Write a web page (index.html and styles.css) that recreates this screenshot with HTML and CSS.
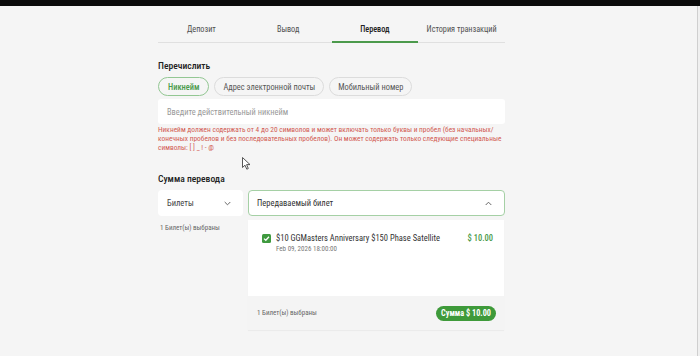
FILE: index.html
```html
<!DOCTYPE html>
<html lang="ru">
<head>
<meta charset="utf-8">
<link rel="stylesheet" href="styles.css">
</head>
<body>
<div class="topbar"></div>
<div class="viewport">
  <div class="page">
    <div class="wallet">
      <nav class="tabs">
        <div class="tab">Депозит</div>
        <div class="tab">Вывод</div>
        <div class="tab active">Перевод</div>
        <div class="tab">История транзакций</div>
      </nav>

      <h2 class="section-title first">Перечислить</h2>
      <div class="pills">
        <button class="pill active">Никнейм</button>
        <button class="pill">Адрес электронной почты</button>
        <button class="pill">Мобильный номер</button>
      </div>
      <div class="input"><span class="placeholder">Введите действительный никнейм</span></div>
      <p class="error">Никнейм должен содержать от 4 до 20 символов и может включать только буквы и пробел (без начальных/ конечных пробелов и без последовательных пробелов). Он может содержать только следующие специальные символы: [ ] _ ! - @</p>

      <h2 class="section-title second">Сумма перевода</h2>
      <div class="amount">
        <div class="left-col">
          <div class="select">
            <span>Билеты</span>
            <svg class="chev" width="7" height="5" viewBox="0 0 7 5"><polyline points="0.7,1 3.5,3.8 6.3,1" fill="none" stroke="#666" stroke-width="1"/></svg>
          </div>
          <div class="count">1 Билет(ы) выбраны</div>
        </div>
        <div class="right-col">
          <div class="select open">
            <span>Передаваемый билет</span>
            <svg class="chev" width="7" height="5" viewBox="0 0 7 5"><polyline points="0.7,4 3.5,1.2 6.3,4" fill="none" stroke="#666" stroke-width="1"/></svg>
          </div>
          <div class="panel">
            <div class="list">
              <div class="item">
                <span class="check"><svg width="9" height="9" viewBox="0 0 9 9"><polyline points="2,4.6 3.8,6.3 7,2.8" fill="none" stroke="#fff" stroke-width="1.3"/></svg></span>
                <div class="item-text">
                  <div class="item-title">$10 GGMasters Anniversary $150 Phase Satellite</div>
                  <div class="item-date">Feb 09, 2026 18:00:00</div>
                </div>
                <div class="price">$ 10.00</div>
              </div>
            </div>
            <div class="panel-foot">
              <span class="count">1 Билет(ы) выбраны</span>
              <span class="total">Сумма $ 10.00</span>
            </div>
          </div>
        </div>
      </div>
    </div>
    <svg class="cursor" width="9" height="13" viewBox="0 0 9 13"><path d="M0.5,0.5 L0.5,10.5 L3,8.2 L4.8,12.2 L6.3,11.5 L4.6,7.6 L8,7.6 Z" fill="#fff" stroke="#444" stroke-width="0.9" stroke-linejoin="round"/></svg>
  </div>
  <div class="gutter"></div>
</div>
</body>
</html>
```

FILE: styles.css
```css
* { box-sizing: border-box; }
html, body { margin: 0; padding: 0; }
body {
  font-family: "Roboto Condensed", Roboto, "Noto Sans", Arial, sans-serif;
  background: #f4f4f4;
  color: #333;
  width: 700px;
  height: 356px;
  overflow: hidden;
}
.topbar { height: 6px; background: #0b0b0b; }
.viewport { display: flex; height: 350px; }
.page {
  position: relative;
  width: 698px;
  border-right: 1px solid #cfcfcf;
  background: #f5f5f5;
}
.gutter { flex: 1; background: #f0f0f0; }
.wallet { width: 347px; margin-left: 158px; }

.tabs {
  display: flex;
  margin-top: 10px;
  border-bottom: 1px solid #e0e0e0;
}
.tab {
  flex: 1;
  height: 26px;
  line-height: 26px;
  text-align: center;
  font-size: 8.2px;
  color: #505050;
  position: relative;
}
.tab.active { color: #222; font-weight: 500; }
.tab.active::after {
  content: "";
  position: absolute;
  left: 0; right: 0; bottom: -1px;
  height: 2px;
  background: #4c9a4c;
}

.section-title {
  margin: 0;
  font-size: 9.6px;
  font-weight: 500;
  color: #222;
  line-height: 14px;
}
.section-title.first { margin-top: 16px; }
.section-title.second { margin-top: 20px; }

.pills { display: flex; gap: 5px; margin-top: 4px; }
.pill {
  height: 19px;
  padding: 0 8px;
  border: 1px solid #dcdcdc;
  border-radius: 10px;
  background: #f5f5f5;
  font-family: inherit;
  font-size: 8.4px;
  color: #555;
}
.pill.active { border-color: #93c793; color: #4a9a4a; font-weight: 500; padding: 0 9px; }

.input {
  margin-top: 3px;
  height: 25px;
  background: #fff;
  border-radius: 3px;
  padding-left: 9px;
  display: flex;
  align-items: center;
}
.placeholder { font-size: 8.4px; color: #999; }

.error {
  margin: 2px 0 0;
  font-size: 7.4px;
  line-height: 8.8px;
  color: #d25a52;
}

.amount { display: flex; gap: 5px; margin-top: 4px; }
.left-col { width: 85px; }
.right-col { flex: 1; }
.select {
  height: 26px;
  background: #fff;
  border-radius: 4px;
  display: flex;
  align-items: center;
  justify-content: space-between;
  padding: 0 12px 0 9px;
  font-size: 8.5px;
  color: #444;
}
.select.open { border: 1px solid #a5d0a5; padding: 0 12px 0 8px; color: #333; }
.chev { display: block; }
.count { font-size: 7px; color: #666; }
.left-col .count { margin-top: 8px; padding-left: 2px; line-height: 9px; }

.panel {
  margin: 4px 1px 0 0;
  box-shadow: 0 1px 1px rgba(0,0,0,0.04);
}
.list { background: #fff; height: 76px; padding: 14px 11px 0 14px; }
.item { display: flex; align-items: flex-start; }
.check {
  width: 9px; height: 9px;
  border-radius: 1.5px;
  background: #3f9a3f;
  display: flex;
}
.item-text { flex: 1; margin-left: 5px; margin-top: -1px; }
.item-title { font-size: 8.5px; color: #333; line-height: 10px; }
.item-date { font-size: 7px; color: #777; line-height: 8px; margin-top: 2px; }
.price { font-size: 8.5px; color: #4a9a4a; font-weight: 500; line-height: 10px; margin-top: -1px; }

.panel-foot {
  height: 34px;
  display: flex;
  align-items: center;
  justify-content: space-between;
  padding: 0 8px 0 9px;
  background: #f4f4f4;
}
.total {
  height: 15px;
  line-height: 15px;
  padding: 0 5px;
  border-radius: 8px;
  background: #3e9a3a;
  color: #fff;
  font-size: 8.2px;
  font-weight: 700;
}
.cursor { position: absolute; left: 242px; top: 151px; }
```
